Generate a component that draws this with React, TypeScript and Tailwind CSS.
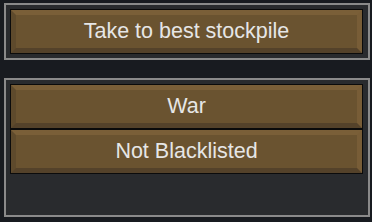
import React from "react";

function Btn({ label }: { label: string }) {
  return (
    <div className="h-[45px] border border-[#0b0b0b] bg-[#0b0b0b]">
      <div className="h-full border-[5px] border-t-[#7a5f38] border-r-[#785d37] border-b-[#54422a] border-l-[#5e4a2c] bg-[#6a5330] flex items-center justify-center pt-[1px]">
        <span className="text-[21.5px] leading-none text-[#e6e6e6]" style={{ fontFamily: '"Liberation Sans", Arial, sans-serif' }}>
          {label}
        </span>
      </div>
    </div>
  );
}

export default function App() {
  return (
    <div className="w-[372px] h-[222px] bg-[#181b20] pt-[3px] pl-[4px] overflow-hidden">
      <div className="w-[366px] border-2 border-[#8a8a8a] bg-[#292b2e] pt-[4px] pb-[4px] pl-[4px] pr-[5px]">
        <Btn label="Take to best stockpile" />
      </div>
      <div className="mt-[18px] w-[366px] h-[139px] border-2 border-[#8a8a8a] bg-[#292b2e] pt-[4px] pl-[4px] pr-[5px] flex flex-col">
        <Btn label="War" />
        <Btn label="Not Blacklisted" />
      </div>
    </div>
  );
}
